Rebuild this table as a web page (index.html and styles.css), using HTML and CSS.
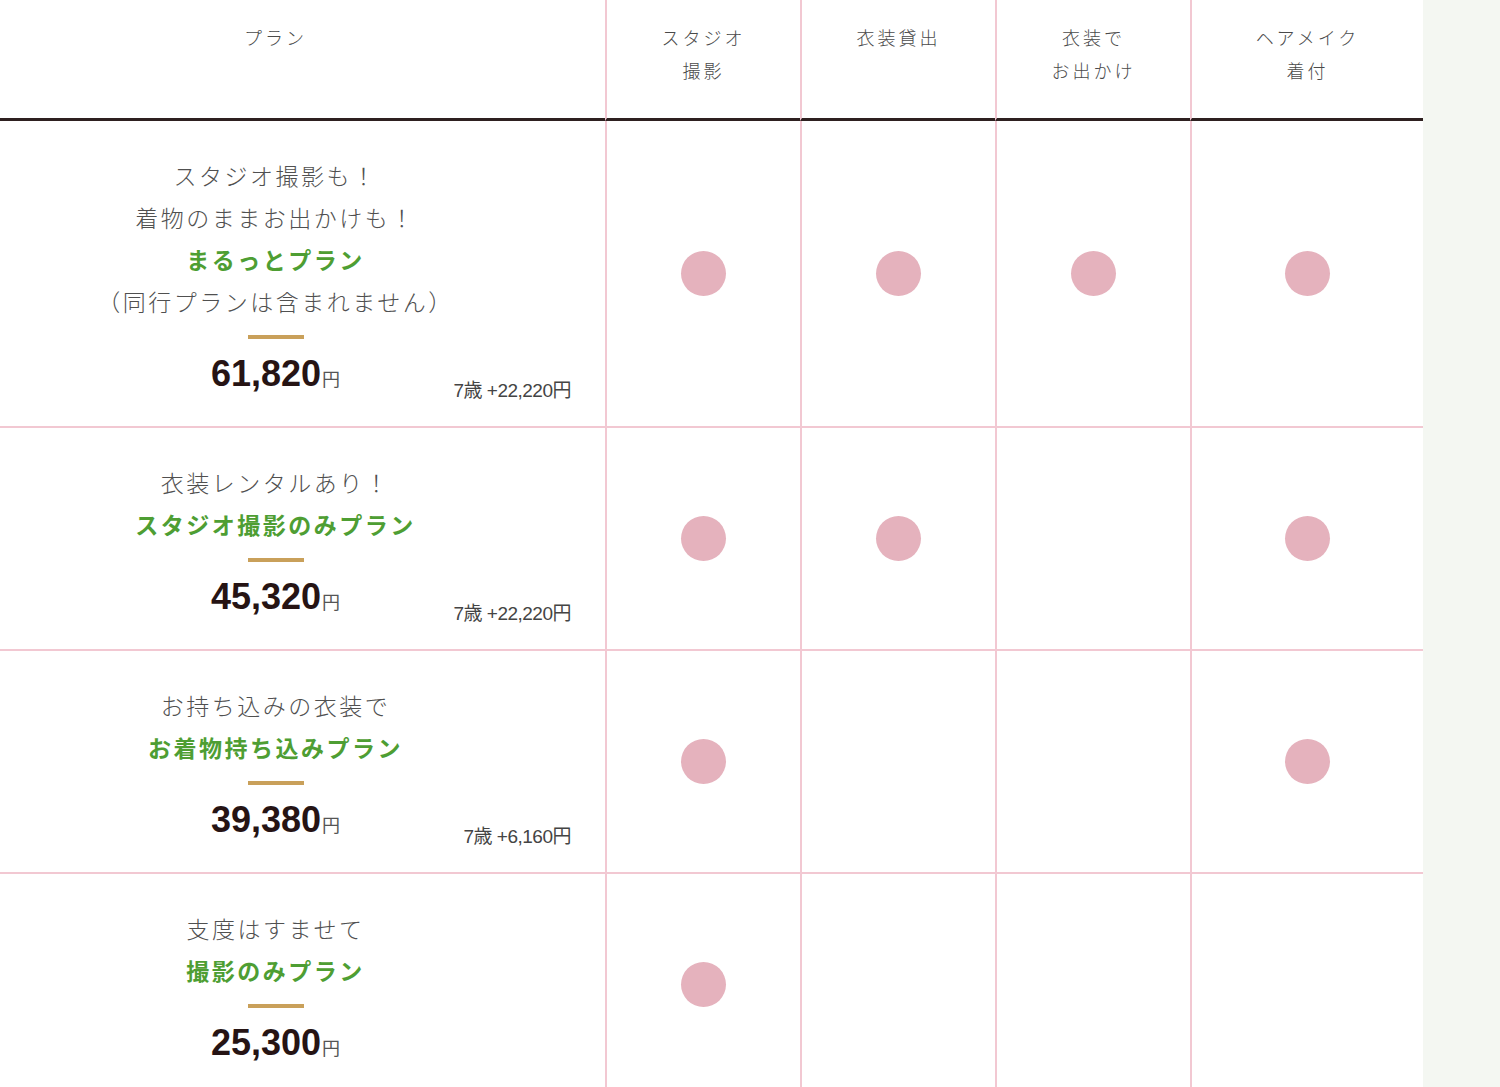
FILE: index.html
```html
<!DOCTYPE html>
<html lang="ja">
<head>
<meta charset="utf-8">
<title>プラン比較</title>
<link rel="stylesheet" href="styles.css">
</head>
<body>
<div class="table">
  <div class="th first">プラン</div>
  <div class="th col">スタジオ<br>撮影</div>
  <div class="th col">衣装貸出</div>
  <div class="th col">衣装で<br>お出かけ</div>
  <div class="th col">ヘアメイク<br>着付</div>

  <div class="td first">
    <p class="lead">スタジオ撮影も！</p>
    <p class="lead">着物のままお出かけも！</p>
    <p class="name">まるっとプラン</p>
    <p class="lead">（同行プランは含まれません）</p>
    <span class="bar"></span>
    <p class="price">61,820<span class="yen">円</span></p>
    <span class="note">7歳 +22,220円</span>
  </div>
  <div class="td col"><span class="dot"></span></div>
  <div class="td col"><span class="dot"></span></div>
  <div class="td col"><span class="dot"></span></div>
  <div class="td col"><span class="dot"></span></div>

  <div class="td first">
    <p class="lead">衣装レンタルあり！</p>
    <p class="name">スタジオ撮影のみプラン</p>
    <span class="bar"></span>
    <p class="price">45,320<span class="yen">円</span></p>
    <span class="note">7歳 +22,220円</span>
  </div>
  <div class="td col"><span class="dot"></span></div>
  <div class="td col"><span class="dot"></span></div>
  <div class="td col"></div>
  <div class="td col"><span class="dot"></span></div>

  <div class="td first">
    <p class="lead">お持ち込みの衣装で</p>
    <p class="name">お着物持ち込みプラン</p>
    <span class="bar"></span>
    <p class="price">39,380<span class="yen">円</span></p>
    <span class="note">7歳 +6,160円</span>
  </div>
  <div class="td col"><span class="dot"></span></div>
  <div class="td col"></div>
  <div class="td col"></div>
  <div class="td col"><span class="dot"></span></div>

  <div class="td first">
    <p class="lead">支度はすませて</p>
    <p class="name">撮影のみプラン</p>
    <span class="bar"></span>
    <p class="price">25,300<span class="yen">円</span></p>
  </div>
  <div class="td col"><span class="dot"></span></div>
  <div class="td col"></div>
  <div class="td col"></div>
  <div class="td col"></div>
</div>
</body>
</html>
```

FILE: styles.css
```css
html, body {
  margin: 0;
  padding: 0;
}
body {
  background: #f4f7f2;
  font-family: "Noto Sans CJK JP", "Noto Sans", sans-serif;
  color: #555;
}
.table {
  display: grid;
  grid-template-columns: 605px 195px 195px 195px 233px;
  width: 1423px;
  background: #fff;
}
.th {
  box-sizing: border-box;
  height: 121px;
  padding-top: 21px;
  text-align: center;
  font-size: 18px;
  font-weight: 300;
  line-height: 33px;
  letter-spacing: 3px;
  color: #4a4a4a;
  border-bottom: 3px solid #2e2020;
}
.th.first {
  padding-right: 54px;
}
.col {
  border-left: 2px solid #f2c8d2;
}
.td {
  border-bottom: 2px solid #f2c8d2;
}
.td.col {
  display: flex;
  align-items: center;
  justify-content: center;
}
.td.first {
  position: relative;
  display: flex;
  flex-direction: column;
  align-items: center;
  padding: 33px 54px 32px 0;
}
.td p {
  margin: 0;
}
.lead {
  font-size: 23px;
  font-weight: 300;
  line-height: 42px;
  letter-spacing: 2.5px;
  color: #505050;
}
.name {
  font-size: 23px;
  font-weight: 700;
  line-height: 42px;
  letter-spacing: 2.5px;
  color: #4e9e33;
}
.bar {
  display: block;
  width: 56px;
  height: 4px;
  margin-top: 13px;
  background: #c9a05a;
}
.td p.price {
  margin-top: 15px;
  height: 40px;
  font-family: "Liberation Sans", Arial, sans-serif;
  font-size: 36px;
  font-weight: 700;
  line-height: 40px;
  color: #261414;
}
.yen {
  margin-left: 1px;
  font-family: "Noto Sans CJK JP", sans-serif;
  font-size: 18px;
  font-weight: 400;
  line-height: 0;
  color: #555;
}
.note {
  position: absolute;
  right: 34px;
  bottom: 24px;
  font-family: "Liberation Sans", "Noto Sans CJK JP", sans-serif;
  font-size: 19px;
  line-height: 22px;
  letter-spacing: -0.5px;
  color: #444;
}
.dot {
  display: block;
  width: 45px;
  height: 45px;
  border-radius: 50%;
  background: #e5b2bd;
}
```
